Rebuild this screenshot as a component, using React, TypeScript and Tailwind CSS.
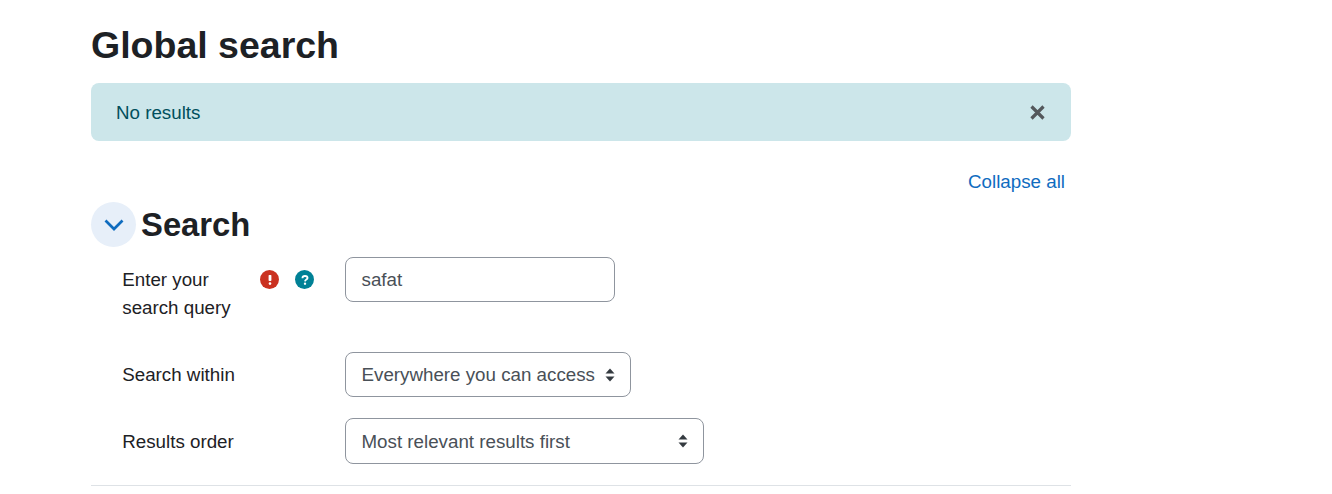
import React from "react";

function ErrorIcon() {
  return (
    <span className="w-[19px] h-[19px] rounded-full bg-[#ca3120] text-white flex items-center justify-center">
      <svg width="4" height="10" viewBox="0 0 4 10" fill="currentColor">
        <rect x="0.6" y="0" width="2.8" height="6" rx="0.7" />
        <circle cx="2" cy="8.6" r="1.3" />
      </svg>
    </span>
  );
}

function HelpIcon() {
  return (
    <span className="w-[19px] h-[19px] rounded-full bg-[#008196] text-white flex items-center justify-center">
      <svg width="8" height="10" viewBox="0 0 8 11" fill="none" stroke="currentColor">
        <path d="M1.2 3.6C1.2 2.1 2.4 1.1 4 1.1C5.6 1.1 6.8 2.1 6.8 3.4C6.8 5.1 4.2 5 4 7" strokeWidth="2" />
        <circle cx="4" cy="9.5" r="1.3" fill="currentColor" stroke="none" />
      </svg>
    </span>
  );
}

function SelectArrows() {
  return (
    <svg width="10" height="14" viewBox="0 0 10 14" fill="#343a40">
      <path d="M5 0.5L9.5 5.5H0.5Z" />
      <path d="M5 13.5L0.5 8.5H9.5Z" />
    </svg>
  );
}

export default function App() {
  return (
    <div className="w-[1332px] h-[494px] overflow-hidden bg-white pl-[91px] text-[#1d2125] font-['Liberation_Sans',sans-serif]">
      <div className="w-[980px]">
        <h2 className="pt-[23px] text-[37.5px] leading-[45px] font-bold">Global search</h2>

        {/* Alert */}
        <div className="mt-[15px] h-[58px] rounded-lg bg-[#cce6ea] pl-[25px] pr-[26px] flex items-center justify-between text-[#004f5c] text-[18.75px]">
          <span className="pt-0.5">No results</span>
          <svg width="15" height="15" viewBox="0 0 15 15" stroke="#54585c" strokeWidth="3.2">
            <path d="M1.5 1.5L13.5 13.5M13.5 1.5L1.5 13.5" />
          </svg>
        </div>

        <div className="mt-[27px] pr-1.5 flex justify-end text-[18.75px] leading-7 text-[#0f6cbf]">
          <a href="#">Collapse all</a>
        </div>

        {/* Search section */}
        <div className="mt-[6px] flex items-center gap-[5px]">
          <span className="w-[45px] h-[45px] rounded-full bg-[#e7eff9] text-[#0f6cbf] flex items-center justify-center">
            <svg width="20" height="12" viewBox="0 0 20 12" fill="none" stroke="currentColor" strokeWidth="2.7">
              <path d="M1.5 1.5L10 10L18.5 1.5" />
            </svg>
          </span>
          <h3 className="text-[32.8px] leading-[45px] font-bold">Search</h3>
        </div>

        <div className="mt-2.5 text-[18.75px] leading-7">
          <div className="flex h-[95px]">
            <div className="w-[254px] pl-[31.25px] flex">
              <label className="w-[137.75px] pt-[9px]">Enter your search query</label>
              <div className="flex gap-4 h-[45px] items-center">
                <ErrorIcon />
                <HelpIcon />
              </div>
            </div>
            <div className="w-[270px] h-[45px] rounded-lg border border-[#8f959e] pl-[15.5px] flex items-center text-[#495057]">
              safat
            </div>
          </div>

          <div className="flex h-[66px]">
            <label className="w-[254px] pl-[31.25px] h-[45px] flex items-center">Search within</label>
            <div className="w-[286px] h-[45px] rounded-lg border border-[#8f959e] pl-[15.5px] pr-[15px] flex items-center justify-between text-[#495057]">
              <span>Everywhere you can access</span>
              <SelectArrows />
            </div>
          </div>

          <div className="flex h-[67px]">
            <label className="w-[254px] pl-[31.25px] h-[46px] pt-[10px]">Results order</label>
            <div className="w-[359px] h-[46px] rounded-lg border border-[#8f959e] pl-[15.5px] pr-[15px] pt-[9px] flex justify-between text-[#495057]">
              <span>Most relevant results first</span>
              <span className="pt-[6px]"><SelectArrows /></span>
            </div>
          </div>
        </div>

        <div className="border-t border-[#dee2e6]" />
      </div>
    </div>
  );
}
